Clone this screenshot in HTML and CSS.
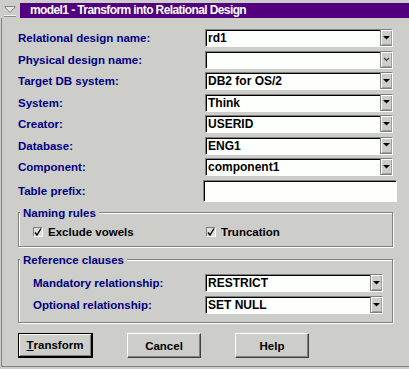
FILE: index.html
```html
<!DOCTYPE html>
<html>
<head>
<meta charset="utf-8">
<link rel="stylesheet" href="styles.css">
</head>
<body>
<div class="titlebar">
  <span class="sysmenu">
    <svg width="14" height="13" viewBox="0 0 14 13">
      <polygon points="1.5,1.5 12.5,1.5 7,7.5" fill="#e8e8e8" stroke="#8a8a8a" stroke-width="1"/>
      <line x1="1" y1="10.5" x2="13" y2="10.5" stroke="#f4f4f4" stroke-width="1"/>
      <line x1="1" y1="11.5" x2="13" y2="11.5" stroke="#8a8a8a" stroke-width="1"/>
    </svg>
  </span>
  <div class="caption">model1 - Transform into Relational Design</div>
</div>
<div class="client">
  <div class="form">
    <span class="lbl">Relational design name:</span>
    <div class="combo"><span class="val">rd1</span><span class="drop"><svg width="7" height="4" viewBox="0 0 7 4"><polygon points="0,0 7,0 3.5,3.5" fill="#000"/></svg></span></div>
    <span class="lbl">Physical design name:</span>
    <div class="combo"><span class="val"></span><span class="drop"><svg width="7" height="5" viewBox="0 0 7 5"><polyline points="1,1 3.5,3.5 6,1" fill="none" stroke="#404040" stroke-width="1.2"/></svg></span></div>
    <span class="lbl">Target DB system:</span>
    <div class="combo"><span class="val">DB2 for OS/2</span><span class="drop"><svg width="7" height="4" viewBox="0 0 7 4"><polygon points="0,0 7,0 3.5,3.5" fill="#000"/></svg></span></div>
    <span class="lbl">System:</span>
    <div class="combo"><span class="val">Think</span><span class="drop"><svg width="7" height="4" viewBox="0 0 7 4"><polygon points="0,0 7,0 3.5,3.5" fill="#000"/></svg></span></div>
    <span class="lbl">Creator:</span>
    <div class="combo"><span class="val">USERID</span><span class="drop"><svg width="7" height="4" viewBox="0 0 7 4"><polygon points="0,0 7,0 3.5,3.5" fill="#000"/></svg></span></div>
    <span class="lbl">Database:</span>
    <div class="combo"><span class="val">ENG1</span><span class="drop"><svg width="7" height="4" viewBox="0 0 7 4"><polygon points="0,0 7,0 3.5,3.5" fill="#000"/></svg></span></div>
    <span class="lbl">Component:</span>
    <div class="combo"><span class="val">component1</span><span class="drop"><svg width="7" height="4" viewBox="0 0 7 4"><polygon points="0,0 7,0 3.5,3.5" fill="#000"/></svg></span></div>
    <span class="lbl">Table prefix:</span>
    <div class="entry"></div>
  </div>

  <fieldset class="group g1">
    <legend>Naming rules</legend>
    <div class="checks">
      <span class="chk"><span class="box"><svg width="8" height="8" viewBox="0 0 8 8"><polyline points="1,4.5 3,7 7,0.5" fill="none" stroke="#000" stroke-width="1.4"/></svg></span>Exclude vowels</span>
      <span class="chk"><span class="box"><svg width="8" height="8" viewBox="0 0 8 8"><polyline points="1,4.5 3,7 7,0.5" fill="none" stroke="#000" stroke-width="1.4"/></svg></span>Truncation</span>
    </div>
  </fieldset>

  <fieldset class="group g2">
    <legend>Reference clauses</legend>
    <div class="refs">
      <span class="lbl">Mandatory relationship:</span>
      <div class="combo"><span class="val">RESTRICT</span><span class="drop"><svg width="7" height="4" viewBox="0 0 7 4"><polygon points="0,0 7,0 3.5,3.5" fill="#000"/></svg></span></div>
      <span class="lbl">Optional relationship:</span>
      <div class="combo"><span class="val">SET NULL</span><span class="drop"><svg width="7" height="4" viewBox="0 0 7 4"><polygon points="0,0 7,0 3.5,3.5" fill="#000"/></svg></span></div>
    </div>
  </fieldset>

  <div class="buttons">
    <span class="btn default"><span class="u">T</span>ransform</span>
    <span class="btn">Cancel</span>
    <span class="btn">Help</span>
  </div>
</div>
</body>
</html>
```

FILE: styles.css
```css
html, body {
  margin: 0;
  padding: 0;
  background: #cdcdc9;
}
body {
  width: 409px;
  height: 369px;
  overflow: hidden;
  font-family: "Liberation Sans", Arial, sans-serif;
  font-weight: bold;
}

.titlebar {
  display: flex;
  height: 15px;
  margin-top: 3px;
}
.sysmenu {
  width: 20px;
  display: flex;
  align-items: center;
  justify-content: center;
  padding-top: 1px;
}
.caption {
  flex: 1;
  background: #530080;
  color: #ffffff;
  font-size: 12px;
  line-height: 15px;
  padding-left: 10px;
  letter-spacing: -0.6px;
  white-space: nowrap;
}

.client {
  margin-left: 1px;
  border-left: 1px solid #808080;
  border-bottom: 1px solid #808080;
  padding: 11px 0 8px 16px;
}

.form {
  display: grid;
  grid-template-columns: 187px 188px;
  grid-template-rows: repeat(7, 18px) 22px;
  row-gap: 3.5px;
  align-items: center;
}

.lbl {
  color: #000080;
  font-size: 11.5px;
  line-height: 18px;
  white-space: nowrap;
}

.combo {
  display: flex;
  height: 18px;
  box-sizing: border-box;
  border: 1px solid;
  border-color: #808080 #ffffff #ffffff #808080;
  background: #fcfffc;
  box-shadow: inset 1px 1px 0 #000;
}
.val {
  flex: 1;
  padding-left: 2px;
  padding-top: 1px;
  font-size: 12px;
  line-height: 15px;
  color: #000;
  white-space: nowrap;
  overflow: hidden;
}
.drop {
  width: 12px;
  box-sizing: border-box;
  background: #cdcdc9;
  border-left: 1px solid #808080;
  border-bottom: 1px solid #808080;
  box-shadow: inset 1px 1px 0 #ffffff, inset -1px -1px 0 #a0a0a0;
  display: flex;
  align-items: center;
  justify-content: center;
}

.entry {
  height: 22px;
  width: 194px;
  margin-left: -2px;
  box-sizing: border-box;
  border: 1px solid;
  border-color: #808080 #ffffff #ffffff #808080;
  background: #fcfffc;
  box-shadow: inset 1px 1px 0 #000;
}

.group {
  margin: 0;
  padding: 0;
  min-width: 0;
  width: 375px;
  box-sizing: border-box;
  border: 1px solid #808080;
  box-shadow: inset 1px 1px 0 #ffffff, 1px 1px 0 #ffffff;
}
.group legend {
  margin-left: 1px;
  padding: 0 3px;
  color: #000080;
  font-size: 11.5px;
  line-height: 14px;
  background: #cdcdc9;
  white-space: nowrap;
}
.g1 {
  margin-top: 4px;
}
.g2 {
  margin-top: 5.5px;
}

.checks {
  display: grid;
  grid-template-columns: 173px auto;
  grid-auto-rows: 14px;
  padding: 5.5px 0 7px 14px;
  align-items: center;
}
.chk {
  display: flex;
  align-items: center;
  font-size: 11.5px;
  color: #000;
  white-space: nowrap;
}
.box {
  width: 10px;
  height: 10px;
  box-sizing: border-box;
  border: 1px solid;
  border-color: #808080 #ffffff #ffffff #808080;
  background: #dedede;
  margin-right: 5px;
  display: flex;
  align-items: center;
  justify-content: center;
}

.refs {
  display: grid;
  grid-template-columns: 172px 178px;
  grid-auto-rows: 18px;
  row-gap: 4px;
  padding: 7.5px 0 8px 14px;
  align-items: center;
}

.buttons {
  display: flex;
  gap: 34px;
  margin-top: 10px;
}
.btn {
  width: 74px;
  height: 25px;
  box-sizing: border-box;
  border: 1px solid;
  border-color: #ffffff #404040 #404040 #ffffff;
  box-shadow: inset -1px -1px 0 #808080;
  display: flex;
  align-items: center;
  justify-content: center;
  font-size: 11.5px;
  color: #000;
}
.btn.default {
  width: 75px;
  border: 1px solid #000;
  border-right-width: 2px;
  border-bottom-width: 2px;
  box-shadow: inset 1px 1px 0 #ffffff, inset -1px -1px 0 #808080;
}
.u {
  text-decoration: underline;
}
```
